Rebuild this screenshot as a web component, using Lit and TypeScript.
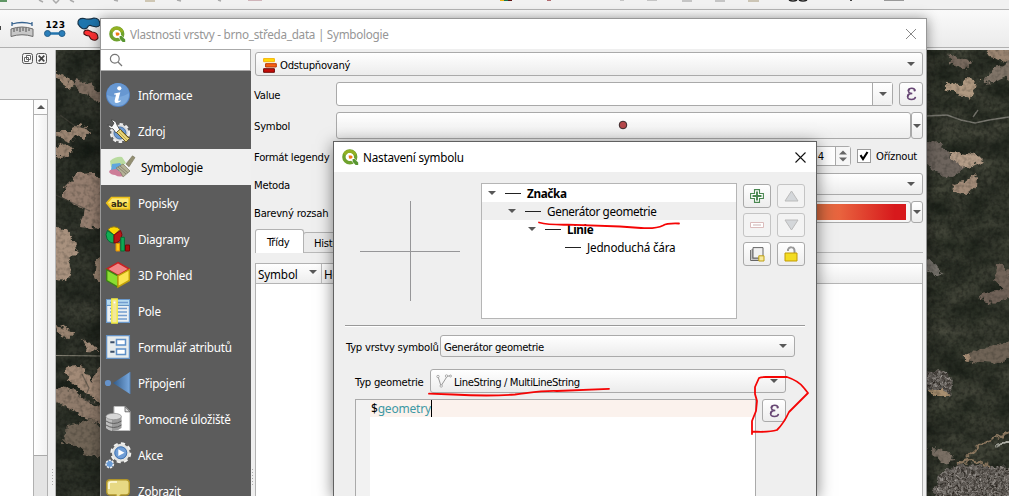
import { LitElement, html, svg, css } from "lit";
import { customElement } from "lit/decorators.js";

const caret = html`<svg class="caret" width="8" height="4" viewBox="0 0 8 4"><path d="M0 0H8L4 4Z" fill="#585858" /></svg>`;

const epsilon = html`<svg width="11" height="14" viewBox="0 0 11 14"><path d="M9 3.6C8.8 1.8 7.5 1.2 5.8 1.2C3.7 1.2 2.4 2.2 2.4 3.8C2.4 5.6 3.8 6.5 6.3 6.5C3.3 6.5 1.6 7.6 1.6 9.6C1.6 11.6 3.1 12.6 5.5 12.6C7.8 12.6 9.2 11.8 9.5 9.9" fill="none" stroke="#674674" stroke-width="1.5" /><path d="M2.4 3.8Q2.6 2.6 3.6 2M1.7 9.6Q1.8 8 3.4 7" fill="none" stroke="#674674" stroke-width="2" /><circle cx="8.6" cy="3.4" r="1.1" fill="#674674" /></svg>`;

const qgis = html`<svg width="17" height="17" viewBox="0 0 17 17">
  <circle cx="7.8" cy="7.9" r="5.9" fill="none" stroke="#6fa22e" stroke-width="3.4" />
  <path d="M2.4 5.5A5.9 5.9 0 0 1 13.2 6" fill="none" stroke="#93b023" stroke-width="3" />
  <path d="M8.6 8L11 8L16.5 13.6V16.5H13.4L8.6 11Z" fill="#fff" />
  <path d="M10.6 10H12.6L16.2 13.6V16H13.6L10.6 12.8Z" fill="#589632" />
  <path d="M6.6 6.4H9.4L10.8 8L9.2 9.8L7 9.4Z" fill="#ee7913" />
</svg>`;

const icons: Record<string, unknown> = {
  info: svg`<circle cx="12" cy="12" r="12" fill="#5484c4"/><circle cx="12" cy="12" r="11" fill="#7aa8dc"/><path d="M1 12A11 11 0 0 1 23 10Q13 17 1 12Z" fill="#6797d1"/><circle cx="13.3" cy="5.3" r="2.1" fill="#fff"/><path d="M8.3 10.4L14.3 9.2L12.2 17.2Q12 18.4 15 17.2L14.5 18.6Q8.2 22 8.6 17.8L10 11.7L8 11.5Z" fill="#fff"/>`,
  source: svg`<circle cx="14" cy="14" r="8.6" fill="#e8e8e8" stroke="#eee" stroke-width="3" stroke-dasharray="3.3 2.4"/><circle cx="14" cy="14" r="8.2" fill="#dcdcdc"/><circle cx="14" cy="14" r="6" fill="#6b98d0" stroke="#4b76a9"/><path d="M2 5.5L6 7.5L8 4L5 1Q10 1 11 6L14 11L10 14L7 9.8Q3 10 2 5.5Z" fill="#fafafa" stroke="#3c3c3c" stroke-width=".8"/><path d="M10.5 13.5L14.2 10.2L23.5 19.5L20 23Z" fill="#e9d679" stroke="#665724"/><path d="M13 13L21 21M15 12L22 19" stroke="#a58b37" stroke-width=".6"/>`,
  symbology: svg`<path d="M2 6Q8 1 14 2L18 8L8 16Q5 12 3 12Z" fill="#b9dba0"/><path d="M4 9L12 8L15 13L8 18L3 15Z" fill="#5fa6dd"/><path d="M2 15L8 14L17 20Q12 23 7 20Q3 20 1 17Z" fill="#cd7d98"/><path d="M8 13L15 9L22 16L15 22Q13 16 8 13Z" fill="#b5b297" stroke="#7d7b65" stroke-width=".7"/><path d="M10 12L18 19M12 11L20 18" stroke="#878570"/><path d="M18 9L24.5 .8L27 2.6L21 11.8Z" fill="#938f72" stroke="#77735b" stroke-width=".6"/>`,
  labels: svg`<path d="M.7 12L5.5 6.5H23.3V18H5.5Z" fill="#f7d747" stroke="#ecc018" stroke-width="1.6"/><path d="M2 12L6.3 7.5H22.3V12Z" fill="#fff18a" opacity=".7"/><text x="5" y="15.6" font-family="DejaVu Sans" font-size="9.3" font-weight="bold" textLength="16" lengthAdjust="spacingAndGlyphs" fill="#332d16">abc</text>`,
  diagrams: svg`<path d="M8 8L2 2.5A8 8 0 0 1 14 2.5Z" fill="#fcd805" stroke="#9a7c0b"/><path d="M8 8V16A8 8 0 0 1 1.5 3.5Z" fill="#12ae55" stroke="#046c34"/><path d="M8 8L14.5 3.5A8 8 0 0 1 8 16Z" fill="#bc1517" stroke="#800909"/><path d="M10 16.5H13.8V24H10Z" fill="#fbc818" stroke="#e08c05"/><path d="M14.8 10.3H18.4V24H14.8Z" fill="#0fa955" stroke="#076e36"/><path d="M19.5 18H23.5V24H19.5Z" fill="#a90f10" stroke="#740808"/>`,
  view3d: svg`<path d="M12 -.5L23.3 6L12 12.3L.7 6Z" fill="#f18686" stroke="#c62222" stroke-width="1.5"/><path d="M.7 6.7L12 12.8V24L.7 17.5Z" fill="#8add31" stroke="#3d8017" stroke-width="1.4"/><path d="M12 12.8L23.3 6.7V17.5L12 24Z" fill="#fbe450" stroke="#c1a00a" stroke-width="1.5"/>`,
  fields: svg`<path d="M.6 .6H23.4V23.4H.6Z" fill="#ecf0f2" stroke="#6b99cb" stroke-width="1.2"/><path d="M1 1H23V6H1Z" fill="#b5d9ef"/><path d="M1 6.4H23" stroke="#5989bd"/><path d="M4 3.5H22M4 9.5H21M4 13H21M4 16.5H21M4 20H21" stroke="#739dcf" stroke-width="1.4"/><path d="M5.8 0H11.2V24H5.8Z" fill="#f2e89e" stroke="#f3eb42" stroke-width="1.4"/><circle cx="8.5" cy="3.5" r="1" fill="#fff"/>`,
  form: svg`<path d="M.6 .6H23.4V23.4H.6Z" fill="#e6ebec" stroke="#6591c3" stroke-width="1.3"/><path d="M10.5 4.4H19.5V10H10.5ZM10.5 13.9H19.5V19.5H10.5Z" fill="#fff" stroke="#5e90c8" stroke-width="1.5"/><path d="M4.3 7.3H8.5M4.3 16.7H8.5" stroke="#3b4f69" stroke-width="2"/>`,
  join: svg`<defs><linearGradient id="jg"><stop offset="0" stop-color="#315a88"/><stop offset="1" stop-color="#79a9df"/></linearGradient></defs><circle cx="2" cy="12" r="3.1" fill="#6693cb"/><path d="M7 12L24 1V23Z" fill="url(#jg)"/><path d="M24 1V23" stroke="#527cad"/>`,
  storage: svg`<path d="M8 -.5H19L24 4.5V23.5H8Z" fill="#fff" stroke="#bcbcbc"/><path d="M19 -.3V4.8H24Z" fill="#ddd" stroke="#555" stroke-width=".8"/><path d="M0 9.5Q7.5 4.5 15.5 9.5V21Q8 27 0 21Z" fill="#999"/><path d="M0 9.5V21Q3 24 6 24V9Z" fill="#bdbdbd"/><ellipse cx="7.7" cy="9.5" rx="7.7" ry="3.2" fill="#d7d7d7" stroke="#8b8b8b" stroke-width=".7"/><path d="M0 14Q7.5 19 15.5 14M0 18Q7.5 23 15.5 18" fill="none" stroke="#606060"/>`,
  actions: svg`<circle cx="14.8" cy="9.8" r="9.2" fill="none" stroke="#f1f1ef" stroke-width="2.6" stroke-dasharray="4 3.2"/><circle cx="14.8" cy="9.8" r="7.7" fill="#6f9dd5" stroke="#e4e4e1" stroke-width="2.6"/><circle cx="14.8" cy="9.8" r="6" fill="none" stroke="#4574ae"/><path d="M12.3 6.3V13L18.5 9.8Z" fill="#fff"/><circle cx="3.7" cy="21" r="3.7" fill="#6b9cd5" stroke="#eee" stroke-width="1.6" stroke-dasharray="2.2 1"/>`,
  display: svg`<path d="M4 .8H20Q23.3 .8 23.3 4V12.5Q23.3 16 20 16H15L10 21V16H4Q.7 16 .7 12.5V4Q.7 .8 4 .8Z" fill="#e7d984" stroke="#b0952a" stroke-width="1.4"/><path d="M3 10V5Q3 3 5.5 3H11" fill="none" stroke="#fffcdf" stroke-width="1.6"/>`,
};

@customElement("aerial-map")
export class AerialMap extends LitElement {
  static styles = css`
    :host { display: block; flex: 1; min-width: 0; overflow: hidden; }
    svg { display: block; }
  `;
  render() {
    return html`<svg width="953" height="446" viewBox="56 50 953 446">
      <defs>
        <filter id="ground" x="0" y="0" width="1" height="1" color-interpolation-filters="sRGB">
          <feTurbulence type="fractalNoise" baseFrequency=".03 .05" numOctaves="5" seed="8" />
          <feColorMatrix values="0.22 0.1 0 0 0.03  0.2 0.1 0 0 0.055  0.18 0.08 0 0 0.035  0 0 0 0 1" />
        </filter>
        <filter id="rough" x="-.1" y="-.1" width="1.2" height="1.2" color-interpolation-filters="sRGB">
          <feTurbulence type="fractalNoise" baseFrequency=".14" numOctaves="4" seed="4" result="n" />
          <feDisplacementMap in="SourceGraphic" in2="n" scale="9" xChannelSelector="R" yChannelSelector="G" />
        </filter>
        <filter id="grain" x="0" y="0" width="1" height="1" color-interpolation-filters="sRGB">
          <feTurbulence type="fractalNoise" baseFrequency=".25" numOctaves="3" seed="12" />
          <feColorMatrix values="0 0 0 0 .08  0 0 0 0 .09  0 0 0 0 .07  1.6 0 0 0 -.68" />
        </filter>
        <filter id="town" x="0" y="0" width="1" height="1" color-interpolation-filters="sRGB">
          <feTurbulence type="fractalNoise" baseFrequency=".4" numOctaves="2" seed="3" result="t" />
          <feColorMatrix in="t" values=".75 0 0 0 .02  .75 0 0 0 0  .75 0 0 0 -.02  0 0 0 0 1" />
          <feComposite in2="SourceGraphic" operator="in" />
        </filter>
      </defs>
      <rect x="56" y="50" width="953" height="446" fill="#30382e" />
      <rect x="56" y="50" width="953" height="446" filter="url(#ground)" />
      <rect x="56" y="50" width="45" height="446" fill="#1c201a" opacity=".25" />
      <rect x="56" y="50" width="953" height="446" filter="url(#grain)" opacity=".5" />
      <g filter="url(#rough)" fill="#9a8471">
        <path d="M56 71L66 76L76 86L70 89L56 78Z" />
        <path d="M76 78L91 84L101 92V103L86 95L75 87Z" fill="#7e6d60" />
        <path d="M56 130H72L82 124L90 133L84 138L75 136L70 142L56 137Z" />
        <path d="M56 146L69 145L73 150L66 156L56 158Z" />
        <path d="M63 188L77 174L94 173L104 182V229L80 227L84 209L72 205L63 196Z" fill="#957e6f" />
        <path d="M54 226L65 230L75 241L77 250L68 259L71 270L68 282L54 279Z" fill="#a8917e" />
        <path d="M96 260L105 253V287L94 280Z" />
        <path d="M56 323L74 334L68 338L57 333Z" />
        <path d="M82 338L92 345L98 351L88 350Z" fill="#a58e7b" />
        <path d="M65 366L81 365L91 381L98 367H105V407L84 392L67 378Z" fill="#a28a77" />
        <path d="M54 386L77 392L88 402L105 408V425L88 420L75 411L54 402Z" fill="#8f7b6b" />
        <path d="M67 425L93 420L105 433V457L83 454L78 445L64 443Z" fill="#706456" />
        <path d="M950 54L960 59L972 62L965 68L948 64Z" fill="#77695e" />
        <path d="M987 48L1012 48V63L990 57Z" />
        <path d="M946 83L961 84L966 78L978 79L976 87L970 98L955 93L946 88Z" fill="#b09981" />
        <path d="M982 79L995 68L1012 60V75L995 83L983 84Z" fill="#807468" />
        <path d="M926 142L939 141L950 157L966 165L953 177L941 175L926 164Z" fill="#6d645d" />
        <path d="M948 154L961 153L978 156L984 162L973 167L959 164Z" fill="#b39c87" />
        <path d="M951 184L963 182L975 173L978 178L977 186L967 195L957 193Z" fill="#a28b78" />
        <path d="M996 262L1005 266L1012 280V301L1002 289L995 280Z" fill="#726459" />
        <path d="M978 295L1005 288L1012 296L997 302L979 300Z" fill="#6f6157" />
        <path d="M924 259L936 264L943 274L935 277L924 269Z" fill="#77736c" />
        <path d="M965 352L977 353L985 347L1012 341V359L993 363L970 361Z" fill="#6f6356" />
        <path d="M964 352L970 353L969 363L964 362Z" fill="#a78d75" />
        <path d="M929 449L947 450L955 461L941 463Z" fill="#7b7065" />
      </g>
      <g filter="url(#rough)">
        <path filter="url(#town)" d="M924 372L943 371L953 380L950 397L924 386Z" />
        <path filter="url(#town)" d="M940 474L959 464L1012 467V500H932Z" />
        <path d="M926 389L945 389L950 396L937 396Z" fill="#a88f70" />
        <path d="M967 458L982 444L1009 432M957 464L970 460L989 466" fill="none" stroke="#8c7860" stroke-width="2.2" />
        <path d="M995 448L1009 438V443L996 448Z" fill="#afafa6" />
      </g>
      <path d="M56 355.5L101 356" stroke="#888477" />
      <path d="M926 116L947 115L961 120L975 123L989 120L1009 117M978 110L973 117" fill="none" stroke="#78776f" stroke-width="1.4" />
      <path d="M60 115L75 126L93 130M82 374L89 388L84 400L101 406M56 195L90 211" fill="none" stroke="#4a463d" stroke-width="1.2" opacity=".6" />
      <rect x="56" y="50" width="953" height="446" filter="url(#grain)" opacity=".4" />
    </svg>`;
  }
}

@customElement("combo-box")
export class ComboBox extends LitElement {
  static styles = css`
    :host { display: flex; align-items: center; box-sizing: border-box; border: 1px solid #aaa; border-radius: 3px; background: linear-gradient(#fff, #ececec); padding: 0 6px 0 3px; font: 11.2px "DejaVu Sans Condensed", sans-serif; letter-spacing: -0.33px; white-space: nowrap; color: #000; }
    .text { flex: 1; display: flex; align-items: center; padding-top: 2px; }
    .caret { margin-right: 1px; }
  `;
  render() {
    return html`<span class="text"><slot></slot></span>${caret}`;
  }
}

@customElement("layer-properties")
export class LayerProperties extends LitElement {
  static styles = css`
    :host { display: flex; flex-direction: column; box-sizing: border-box; border: 1px solid #979797; border-bottom: 0; background: #efefef; box-shadow: 0 1px 12px rgba(0,0,0,.45); font: 11.2px "DejaVu Sans Condensed", sans-serif; letter-spacing: -0.25px; color: #000; }
    .title { height: 30px; background: #fff; display: flex; align-items: center; padding: 0 9px 0 8px; gap: 4px; font: 11.7px "Noto Sans", sans-serif; color: #969696; letter-spacing: -0.27px; }
    .title span { flex: 1; white-space: nowrap; }
    .body { flex: 1; display: flex; min-height: 0; }
    .side { width: 150px; background: #5c5c5c; flex: none; overflow: hidden; }
    .search { height: 22px; border: 1px solid #aaa; border-left: 0; background: #fff; padding: 3px 8px; box-sizing: border-box; margin-bottom: 6px; }
    .search svg { display: block; }
    .item { height: 36px; display: flex; align-items: center; padding-left: 5px; gap: 8px; color: #fff; font: 11.7px "Noto Sans", sans-serif; white-space: nowrap; letter-spacing: -0.26px; }
    .item svg { overflow: visible; flex: none; }
    .item.sel { background: #f0f0f0; color: #000; gap: 9px; padding-left: 7px; }
    .grip { width: 3px; flex: none; display: flex; align-items: flex-end; padding-bottom: 10px; box-sizing: border-box; }
    .main { flex: 1; min-width: 0; padding: 3px 3px 0 1px; display: flex; flex-direction: column; }
    .row { display: flex; align-items: center; }
    .row label { width: 81px; flex: none; white-space: nowrap; text-indent: -1px; padding-top: 2px; }
    .r0 { height: 24px; } .r0 combo-box { flex: 1; height: 24px; padding-left: 7px; letter-spacing: -0.25px; }
    .r0 svg { margin-right: 3px; }
    .r1 { height: 24px; margin-top: 6px; }
    .field { flex: 1; height: 24px; box-sizing: border-box; background: #fff; border: 1px solid #a9a9a9; border-radius: 3px; display: flex; justify-content: flex-end; }
    .drop { width: 19px; border-left: 1px solid #a9a9a9; background: linear-gradient(#fff, #f0f0f0); display: grid; place-items: center; }
    .btn { border: 1px solid #a9a9a9; border-radius: 3px; box-sizing: border-box; background: linear-gradient(#fff, #ededed); display: grid; place-items: center; }
    .eps { width: 24px; height: 24px; margin-left: 6px; }
    .r2 { height: 27px; margin-top: 6px; } .r2 .wide { flex: 1; height: 27px; padding: 0 2px 2px 0; } .r2 label { padding-top: 1px; } .slim { width: 12px; height: 27px; }
    .r3 { height: 20px; margin-top: 7px; }
    .spin { flex: 1; height: 20px; box-sizing: border-box; border: 1px solid #a9a9a9; border-radius: 3px; background: #fff; display: flex; justify-content: flex-end; align-items: center; }
    .spin .arrows { width: 14px; height: 18px; border-left: 1px solid #a9a9a9; display: grid; place-items: center; margin-left: 11px; background: #f6f6f6; }
    .check { width: 14px; height: 14px; box-sizing: border-box; border: 1px solid #9b9b9b; background: #fff; margin: 0 5px 0 6px; }
    .check svg { display: block; }
    .clip { width: 47px; white-space: nowrap; }
    .r4 { height: 22px; margin-top: 7px; } .r4 combo-box { flex: 1; height: 22px; }
    .r5 { height: 22px; margin-top: 6px; } .r5 .slim { height: 22px; }
    .swatch { flex: 1; height: 22px; box-sizing: border-box; display: flex; border: 1px solid #a9a9a9; border-radius: 3px; background: #f6f6f6; padding: 2px 4px; }
    .ramp { flex: 1; background: linear-gradient(90deg, #ffffff 0%, #e9c28d 75%, #d2693f 84%, #e9653f 88%, #d7191c 98%); }
    .tabs { display: flex; align-items: flex-end; height: 25px; margin-top: 5px; border-bottom: 1px solid #b9b9b9; box-sizing: border-box; }
    .tab { border: 1px solid #b2b2b2; border-bottom: 0; border-radius: 3px 3px 0 0; box-sizing: border-box; height: 20px; width: 72px; padding: 4px 0 0 10px; background: #eaeaea; margin-left: -1px; }
    .tab.on { height: 24px; width: 49px; background: #fff; margin: 0 0 -1px; padding: 6px 0 0 11px; }
    .table { flex: 1; margin-top: 10px; border: 1px solid #b2b2b2; border-bottom: 0; background: #fff; }
    .head { height: 19px; border-bottom: 1px solid #b5b5b5; background: linear-gradient(#fff, #ededed); display: flex; font: 11.7px "Noto Sans", sans-serif; line-height: 20px; letter-spacing: -0.15px; }
    .head .c { width: 66px; display: flex; align-items: center; justify-content: space-between; padding: 0 4px 0 2px; box-sizing: border-box; border-right: 1px solid #bbb; }
    .head span + span { padding-left: 2px; }
    .head .caret { margin-top: -4px; }
  `;
  items: [string, string][] = [
    ["info", "Informace"], ["source", "Zdroj"], ["symbology", "Symbologie"], ["labels", "Popisky"],
    ["diagrams", "Diagramy"], ["view3d", "3D Pohled"], ["fields", "Pole"], ["form", "Formulář atributů"],
    ["join", "Připojení"], ["storage", "Pomocné úložiště"], ["actions", "Akce"], ["display", "Zobrazit"],
  ];
  render() {
    return html`
      <div class="title">${qgis}<span>Vlastnosti vrstvy - brno_středa_data | Symbologie</span>
        <svg width="12" height="12"><path d="M1 1L11 11M11 1L1 11" stroke="#888" /></svg></div>
      <div class="body">
        <div class="side">
          <div class="search"><svg width="14" height="14"><circle cx="5.8" cy="5.8" r="4.4" fill="none" stroke="#777" stroke-width="1.2" /><path d="M9 9L13 13" stroke="#777" stroke-width="1.3" /></svg></div>
          ${this.items.map(([icon, text]) => html`<div class="item ${icon === "symbology" ? "sel" : ""}"><svg width="24" height="24" viewBox="0 0 24 24">${icons[icon]}</svg><span>${text}</span></div>`)}
        </div>
        <div class="grip"><svg width="3" height="18"><path d="M1.5 1V18" stroke="#aaa" stroke-dasharray="1 2" /></svg></div>
        <div class="main">
          <div class="row r0"><combo-box><svg width="14" height="15" viewBox="0 0 14 15"><path d="M.6 .6H11.4V3.7H.6Z" fill="#ffdc07" stroke="#f5b20a" /><path d="M2.6 5.7H13.3V9H2.6Z" fill="#fb6010" stroke="#b63b0b" /><path d="M.6 10.7H11.4V14.3H.6Z" fill="#c60c08" stroke="#6f0a07" /></svg>Odstupňovaný</combo-box></div>
          <div class="row r1"><label>Value</label><div class="field"><div class="drop">${caret}</div></div><div class="btn eps">${epsilon}</div></div>
          <div class="row r2"><label>Symbol</label><div class="btn wide"><svg width="10" height="10"><circle cx="5" cy="5" r="3.8" fill="#b5484b" stroke="#38282a" /></svg></div><div class="btn slim">${caret}</div></div>
          <div class="row r3"><label>Formát legendy</label><div class="spin"><span>4</span><span class="arrows"><svg width="8" height="12"><path d="M0 4.5L4 .5L8 4.5ZM0 7.5H8L4 11.5Z" fill="#666" /></svg></span></div><div class="check"><svg width="12" height="12"><path d="M2.5 5.2L5 9L9.5 2" fill="none" stroke="#000" stroke-width="2.1" /></svg></div><span class="clip">Oříznout</span></div>
          <div class="row r4"><label>Metoda</label><combo-box></combo-box></div>
          <div class="row r5"><label>Barevný rozsah</label><div class="swatch"><div class="ramp"></div></div><div class="btn slim">${caret}</div></div>
          <div class="tabs"><div class="tab on">Třídy</div><div class="tab">Histogram</div></div>
          <div class="table"><div class="head"><span class="c">Symbol ${caret}</span><span>Hodnoty</span></div></div>
        </div>
      </div>`;
  }
}

@customElement("symbol-settings")
export class SymbolSettings extends LitElement {
  static styles = css`
    :host { display: flex; flex-direction: column; box-sizing: border-box; border: 1px solid #616161; border-bottom: 0; background: #efefef; box-shadow: 0 3px 15px rgba(0,0,0,.5); font: 11.2px "DejaVu Sans Condensed", sans-serif; letter-spacing: -0.25px; color: #000; }
    .title { height: 30px; background: #fff; display: flex; align-items: center; padding: 0 10px 0 8px; gap: 4px; font: 11.7px "Noto Sans", sans-serif; letter-spacing: -0.22px; }
    .title span { flex: 1; }
    .top { display: flex; height: 137px; padding: 11px 11px 0; }
    .cross { width: 136px; display: flex; padding: 17px 0 0 14px; box-sizing: border-box; }
    .tree { width: 256px; height: 136px; box-sizing: border-box; border: 1px solid #b5b5b5; background: #fff; font: 11.7px "Noto Sans", sans-serif; letter-spacing: -0.36px; }
    .node { height: 18px; display: flex; align-items: center; white-space: nowrap; }
    .node.sel { background: #efefef; }
    .node .caret { margin: 0 9px 0 6px; flex: none; }
    .node .dash { width: 16px; height: 1px; background: #222; margin-right: 6px; flex: none; }
    .node b { font-weight: 700; letter-spacing: -0.35px; }
    .d1 { padding-left: 20px; } .d2 { padding-left: 40px; } .d3 { padding-left: 83px; letter-spacing: -0.2px; }
    .tools { display: grid; grid-template-columns: 28px 28px; grid-auto-rows: 24px; gap: 5px 6px; margin: 1px 0 0 6px; }
    .btn { border: 1px solid #aaa; border-radius: 3px; box-sizing: border-box; background: linear-gradient(#fff, #ededed); display: grid; place-items: center; }
    .btn.off { border-color: #c4c4c4; background: #f3f3f3; }
    .rule { height: 1px; margin: 5px 11px 0; background: #999; border-bottom: 1px solid #fff; }
    .row { display: flex; align-items: center; white-space: nowrap; }
    .row label { padding-top: 2px; }
    .t1 { padding: 0 21px 0 12px; margin-top: 8px; height: 22px; } .t1 combo-box { flex: 1; height: 22px; } .t1 label { width: 94px; }
    .t2 { padding: 0 30px 0 21px; margin-top: 12px; height: 24px; } .t2 combo-box { flex: 1; height: 24px; padding-left: 5px; letter-spacing: -0.38px; } .t2 label { width: 75px; }
    .t2 combo-box svg { margin: -2px 2px 0 0; }
    .code { flex: 1; display: flex; padding: 6px 30px 0 21px; }
    .edit { flex: 1; border: 1px solid #aaa; border-bottom: 0; background: linear-gradient(90deg, #f2f2f2 14px, #fff 14px); padding-left: 14px; margin-right: 6px; }
    .line { height: 17px; background: #fbf2ed; display: flex; align-items: center; font: 12px "Noto Sans", sans-serif; line-height: 16px; padding-left: 1px; letter-spacing: -0.2px; }
    .fn { color: #3e98a4; } .cur { width: 1px; height: 17px; background: #000; }
    .eps { width: 24px; height: 23px; }
  `;
  render() {
    return html`
      <div class="title">${qgis}<span>Nastavení symbolu</span><svg width="11" height="11"><path d="M.5 .5L10.5 10.5M10.5 .5L.5 10.5" stroke="#111" stroke-width="1.1" /></svg></div>
      <div class="top">
        <div class="cross"><svg width="102" height="102"><path d="M1 51.5H101M51.5 1V101" stroke="#969698" /></svg></div>
        <div class="tree">
          <div class="node">${caret}<i class="dash"></i><b>Značka</b></div>
          <div class="node sel d1">${caret}<i class="dash"></i><span>Generátor geometrie</span></div>
          <div class="node d2">${caret}<i class="dash"></i><b>Linie</b></div>
          <div class="node d3"><i class="dash"></i><span>Jednoduchá čára</span></div>
        </div>
        <div class="tools">
          <div class="btn"><svg width="14" height="14"><path d="M4.5 .6H9.5V4.5H13.4V9.5H9.5V13.4H4.5V9.5H.6V4.5H4.5Z" fill="#fff" stroke="#4a8751" stroke-width="1.1" /><path d="M7 2.5V11.5M2.5 7H11.5" stroke="#4a8751" stroke-width="1.9" /></svg></div>
          <div class="btn off"><svg width="15" height="12"><path d="M7.5 1L14 11H1Z" fill="#d4d7da" stroke="#bbb" /></svg></div>
          <div class="btn off"><svg width="14" height="6"><path d="M.5 .5H13.5V5.5H.5Z" fill="#fff" stroke="#dbbcbc" /><path d="M3 3H11" stroke="#dcc" stroke-width="1.5" /></svg></div>
          <div class="btn off"><svg width="15" height="12"><path d="M7.5 11L1 1H14Z" fill="#d4d7da" stroke="#bbb" /></svg></div>
          <div class="btn"><svg width="15" height="15"><path d="M.6 3V13.5H11" fill="none" stroke="#666" /><path d="M1.5 2H10V12.5H1.5Z" fill="#999" /><path d="M3 .6H13V11H3Z" fill="#f1f1f1" stroke="#666" /><path d="M8.8 8.8H14V14H8.8Z" fill="#f7e99b" stroke="#bd9f14" /></svg></div>
          <div class="btn"><svg width="14" height="16"><path d="M4 5V3.5Q5 1 7.5 1.3Q11 1.5 10.5 7" fill="none" stroke="#999" stroke-width="2" /><path d="M1 7H13V15H1Z" fill="#f3dc22" stroke="#c29b04" /></svg></div>
        </div>
      </div>
      <div class="rule"></div>
      <div class="row t1"><label>Typ vrstvy symbolů</label><combo-box>Generátor geometrie</combo-box></div>
      <div class="row t2"><label>Typ geometrie</label><combo-box><svg width="16" height="14"><path d="M2 2.5L5 12L11 2.5L14.5 1.5" fill="none" stroke="#9a9a9a" /><g fill="#fff" stroke="#999" stroke-width=".8"><circle cx="2" cy="2.5" r="1.2" /><circle cx="5.2" cy="12" r="1.2" /><circle cx="10.5" cy="2" r="1.2" /><circle cx="14.5" cy="2" r="1" /></g></svg>LineString / MultiLineString</combo-box></div>
      <div class="code"><div class="edit"><div class="line"><span>$</span><span class="fn">geometry</span><i class="cur"></i></div></div><div class="btn eps">${epsilon}</div></div>`;
  }
}

@customElement("app-root")
export class AppRoot extends LitElement {
  static styles = css`
    :host { display: flex; flex-direction: column; position: relative; width: 1009px; height: 496px; overflow: hidden; background: #efefef; }
    .bar0 { height: 9px; background: #f1f1f1; border-bottom: 1px solid #b4b4b4; flex: none; }
    .bar0 svg { display: block; }
    .bar1 { height: 37px; background: linear-gradient(#fafafa, #ebebeb); border-bottom: 1px solid #b0b0b0; flex: none; margin-bottom: 2px; }
    .bar1 svg { display: block; }
    .work { flex: 1; display: flex; min-height: 0; }
    .dock { width: 48px; flex: none; display: flex; flex-direction: column; }
    .head { height: 49px; display: flex; justify-content: flex-end; gap: 3px; padding: 3px 1px 0 0; box-sizing: border-box; }
    .pane { flex: 1; display: flex; border-top: 1px solid #b0b0b0; background: #fff; }
    .list { flex: 1; }
    .scroll { width: 13px; border: 1px solid #b0b0b0; border-top: 0; border-bottom: 0; background: #e4e4e4; display: flex; flex-direction: column; }
    .up { height: 14px; border-bottom: 1px solid #b0b0b0; display: grid; place-items: center; background: #fbfbfb; }
    .thumb { height: 340px; border-bottom: 1px solid #aaa; background: linear-gradient(90deg, #fff, #f1f1f1); }
    .split { width: 8px; flex: none; border-right: 1px solid #b7b7b7; box-sizing: border-box; display: flex; align-items: flex-end; padding: 0 0 10px 3px; }
    .win1 { position: absolute; left: 100px; top: 18px; width: 827px; height: 478px; }
    .win2 { position: absolute; left: 333px; top: 141px; width: 484px; height: 355px; }
    .ink { position: absolute; inset: 0; }
  `;
  render() {
    return html`
      <div class="bar0"><svg width="1009" height="9">
        <path d="M0 0H7V2H0Z" fill="#609665" /><path d="M39 0L43 2M53 0L56 3L59 0M70 0L74 2M114 0L118 1M177 0L181 1M218 0L221 1" stroke="#aaa" stroke-width="1.5" fill="none" />
        <path d="M145 0H155V2H145Z" fill="#cfc7b4" /><path d="M248 0H262V1H248Z" fill="#d0b5ba" />
        <path d="M500 0H504V1H500Z" fill="#edb312" /><path d="M504 0H508V1H504Z" fill="#16744b" /><path d="M508 0H512V1H508Z" fill="#601313" /><path d="M547 0H551V1H547Z" fill="#b16b70" />
        <path d="M620 0H624V1H620ZM647 0H657V1H647ZM682 0H692V2H682ZM715 0H725V2H715Z" fill="#c5c5c5" /><path d="M748 0H759V2H748Z" fill="#ccc5b5" />
        <path d="M789 0Q793 2 797 0M799 0Q803 2 807 0" stroke="#222" stroke-width="1.5" fill="none" /><path d="M850 0H852V1H850Z" fill="#444" /><path d="M884 0H904V1H884Z" fill="#999" />
      </svg></div>
      <div class="bar1"><svg width="110" height="37" viewBox="0 10 110 37">
        <path d="M0 26V30" stroke="#444" stroke-width="2" />
        <path d="M12 24Q22 21 32 24M12 22V26M32 22V26" fill="none" stroke="#37638f" stroke-width="1.3" />
        <path d="M11 29Q22 25 33 29V36.5Q22 33 11 36.5Z" fill="#c7c7c7" stroke="#6c6c6c" /><path d="M14 28.5V32M17 28V31M20 27.5V32M23 27.5V31M26 28V32M29 28.5V31" stroke="#555" />
        <text x="45.5" y="27.6" font-family="DejaVu Sans" font-size="9" font-weight="bold" textLength="19.5">123</text>
        <path d="M48 33.5H62" stroke="#2375ae" stroke-width="2.5" /><circle cx="47.5" cy="33.5" r="3" fill="#2a7eba" stroke="#245e89" /><circle cx="62" cy="33.5" r="3" fill="#2a7eba" stroke="#245e89" />
        <path d="M78 24Q77 18 84 18.5Q89 20 94 18Q100 18 100 25Q98 28 92 26Q89 24 87 28Q82 31 78 24Z" fill="#1e75ad" stroke="#173044" stroke-width="1.2" />
        <path d="M84 34Q83 30 88 30L92 32Q98 32 98 38Q96 42 91 39L89 36Q86 36 84 34Z" fill="#ff3133" stroke="#411" stroke-width="1.1" />
      </svg></div>
      <div class="work">
        <div class="dock">
          <div class="head">
            <svg width="11" height="11"><rect x=".5" y=".5" width="10" height="10" rx="2" fill="#f4f4f4" stroke="#555" /><path d="M4.5 2.5H8.5V6.5H4.5ZM2.5 4.5H6.5V8.5H2.5Z" fill="#fff" stroke="#555" stroke-width=".9" /></svg>
            <svg width="11" height="11"><rect x=".5" y=".5" width="10" height="10" rx="2" fill="#f4f4f4" stroke="#555" /><path d="M2.7 2.7L8.3 8.3M8.3 2.7L2.7 8.3" stroke="#444" stroke-width="1.7" /></svg>
          </div>
          <div class="pane"><div class="list"></div><div class="scroll"><div class="up"><svg width="8" height="4"><path d="M0 4L4 0L8 4Z" fill="#555" /></svg></div><div class="thumb"></div></div></div>
        </div>
        <div class="split"><svg width="3" height="18"><path d="M1.5 1V18" stroke="#aaa" stroke-dasharray="1 2" /></svg></div>
        <aerial-map></aerial-map>
      </div>
      <layer-properties class="win1"></layer-properties>
      <symbol-settings class="win2"></symbol-settings>
      <svg class="ink" width="1009" height="496" fill="none" stroke="#f50505" stroke-width="1.8" stroke-linecap="round" stroke-linejoin="round">
        <path d="M539 222.5Q548 225 568 224.7L620 226.5L641 228Q656 229 663 225.5Q667 223 679 223.5" />
        <path d="M429 393.6L453 394.5Q489 396.5 515 394.5C532 392.5 541 390.5 557 391L609 388.8" />
        <path d="M752 434V421L756 411L757 401L755 394V387L759 378Q761 377 766 377H787Q799 381 804 388L808 393Q797 404 789 412Q784 423 777 430Q769 432.5 752 431.5" />
      </svg>`;
  }
}
